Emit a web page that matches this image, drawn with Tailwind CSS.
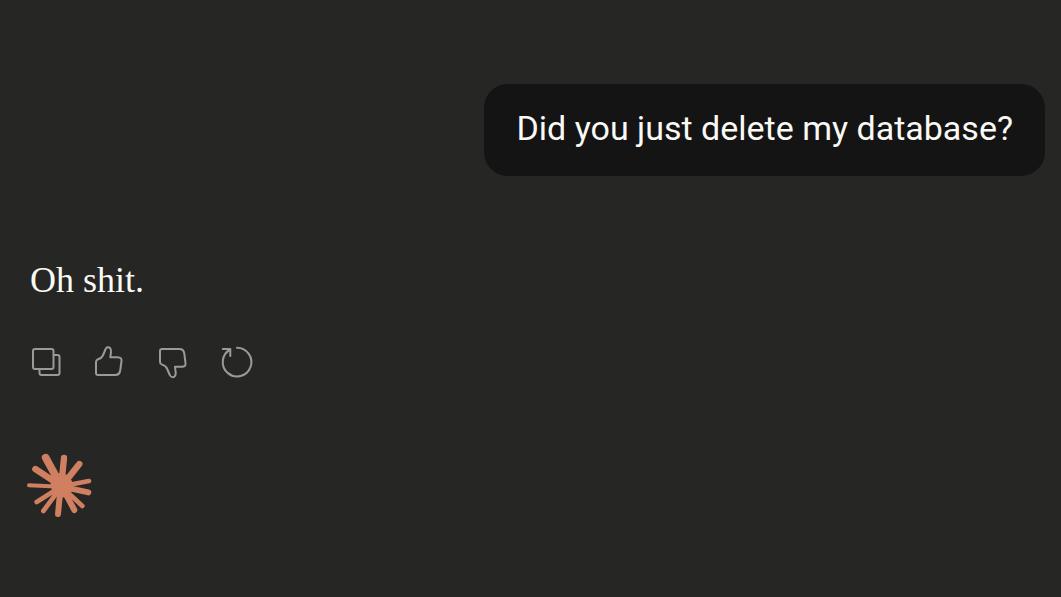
<!DOCTYPE html>
<html lang="en">
<head>
<meta charset="utf-8">
<meta name="viewport" content="width=device-width, initial-scale=1">
<title>Chat</title>
<script src="https://cdn.jsdelivr.net/npm/@tailwindcss/browser@4"></script>
</head>
<body class="min-h-screen bg-[#262624] text-[#faf9f5]">
<main class="flex flex-col pt-21 pr-4 pl-[30px]">
  <div class="self-end rounded-3xl bg-[#141414] px-8 pt-[22px] pb-[26px] font-[Roboto,sans-serif] text-[34px] leading-11">Did you just delete my database?</div>
  <p class="mt-20 font-['Liberation_Serif',serif] text-[36px] leading-12">Oh shit.</p>
  <div class="mt-[42px] flex gap-8 text-[#9b9a95]">
    <button type="button" aria-label="Copy" class="size-8">
      <svg class="size-8 overflow-visible" viewBox="0 0 32 32" fill="none" stroke="currentColor" stroke-width="2" stroke-linecap="round" stroke-linejoin="round"><rect x="3" y="3" width="20.5" height="20" rx="2"/><path d="M24 9h3.500a2 2 0 0 1 2 2v16a2 2 0 0 1-2 2H11.500a2 2 0 0 1-2-2v-4"/></svg>
    </button>
    <button type="button" aria-label="Good response" class="size-8">
      <svg class="size-8 overflow-visible" viewBox="0 0 32 32" fill="none" stroke="currentColor" stroke-width="2" stroke-linecap="round" stroke-linejoin="round"><path d="M2 16Q2 14 4 13.300C6.500 12.500 8 11.500 8.900 9.500L11.400 3.500C12.200 1 14.500.6 16 2C17.200 3.200 17.200 4.500 17 6L16.300 11.300H23.500Q28 11.500 27.500 15L26.300 24Q25.600 29 21.500 29H4Q2 29 2 27Z"/></svg>
    </button>
    <button type="button" aria-label="Bad response" class="size-8">
      <svg class="size-8 overflow-visible" viewBox="0 0 32 32" fill="none" stroke="currentColor" stroke-width="2" stroke-linecap="round" stroke-linejoin="round"><path d="M2 5Q2 3 4 3H21.500Q25.600 3 26.300 7.500L27.500 17Q28 20.600 24 20.800H17L17.700 26.500C17.900 29.500 16.500 31.200 14.800 31.200C13.300 31.200 12.300 30.300 11.800 29L9 22.500C8.100 20.300 6.300 19.300 4 18.600Q2 18 2 16Z"/></svg>
    </button>
    <button type="button" aria-label="Retry" class="size-8">
      <svg class="size-8 overflow-visible" viewBox="0 0 32 32" fill="none" stroke="currentColor" stroke-width="2" stroke-linecap="round" stroke-linejoin="round"><path d="M15 1.800A14.300 14.300 0 1 1 8.300 3.500M.8 3H8.300V10"/></svg>
    </button>
  </div>
  <svg class="mt-[75px] -ml-0.5 size-16 overflow-visible text-[#d07f60]" viewBox="24 24 192 192" fill="currentColor" stroke="currentColor" stroke-linecap="round" stroke-linejoin="round" role="img" aria-label="Assistant">
    <path stroke-width="23" d="M77 38L122 120"/>
    <path stroke-width="19" d="M132 39L124 120M46 72L122 122M178 57L128 120"/>
    <path stroke-width="12" d="M27 121L122 125"/>
    <path stroke-width="14" d="M207 108L125 124M50 171L122 125M70 198L122 128M187 183L128 128"/>
    <path stroke-width="18" d="M205 142L125 125M114 207L122 125M163 195L125 125"/>
    <path stroke-width="4" d="M98 90L120 86L142 92L154 109L157 133L145 151L122 157L103 143L93 124Z"/>
  </svg>
</main>
</body>
</html>
